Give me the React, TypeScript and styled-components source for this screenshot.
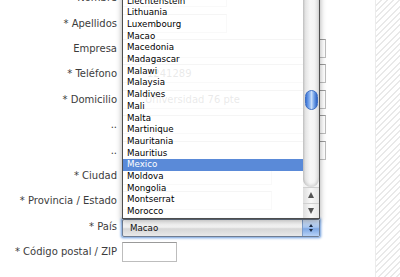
import React from "react";
import styled, { createGlobalStyle } from "styled-components";

const GlobalStyle = createGlobalStyle`
  html, body { margin: 0; padding: 0; background: #ffffff; overflow: hidden; }
  * { box-sizing: border-box; }
`;

const Page = styled.div`
  width: 400px;
  height: 277px;
  overflow: hidden;
  display: flex;
  background: #ffffff;
  font-family: "DejaVu Sans", Verdana, sans-serif;
`;

const Main = styled.div`
  flex: 1;
  position: relative;
`;

const Hatch = styled.div`
  width: 25px;
  border-left: 1px solid #ececec;
  background: repeating-linear-gradient(
    135deg,
    #ffffff 0px,
    #ffffff 3px,
    #e9e9e9 3px,
    #e9e9e9 4.4px
  );
`;

const Form = styled.div`
  display: grid;
  grid-template-columns: 117px 1fr;
  grid-auto-rows: 25.4px;
  column-gap: 5px;
  align-items: center;
  margin-top: -15px;
`;

const Label = styled.div`
  text-align: right;
  font-size: 10px;
  color: #3c3c3c;
  white-space: nowrap;
`;

const Field = styled.div`
  position: relative;
  display: flex;
  align-items: center;
`;

const TextInput = styled.div<{ $w: number; $h?: number; $indent?: number }>`
  width: ${(p) => p.$w}px;
  height: ${(p) => p.$h ?? 19}px;
  border: 1px solid #bdbdbd;
  border-top-color: #9a9a9a;
  background: #ffffff;
  font-size: 10px;
  color: #222;
  display: flex;
  align-items: center;
  padding-left: ${(p) => p.$indent ?? 4}px;
`;

const SelectBox = styled.div`
  position: relative;
  width: 198px;
  height: 18px;
  margin-top: 3px;
  border: 1px solid #6f7d92;
  border-radius: 2px;
  box-shadow: 0 0 0 1px #9bbbe6, 0 0 2px 2px #b9d0f0;
  background: linear-gradient(#ffffff 0%, #f1f1f1 45%, #d6d6d6 55%, #e9e9e9 100%);
  display: flex;
  align-items: center;
`;

const SelectText = styled.span`
  flex: 1;
  padding-left: 7px;
  font-size: 8.7px;
  color: #111;
`;

const Stepper = styled.div`
  width: 17px;
  align-self: stretch;
  border-left: 1px solid #7d9cc8;
  background: linear-gradient(#d8e7fb 0%, #a9c7f0 45%, #7ea8e4 55%, #b7d2f6 100%);
  display: flex;
  flex-direction: column;
  align-items: center;
  justify-content: center;
  gap: 2px;
`;

const Tri = styled.div<{ $up?: boolean }>`
  width: 0;
  height: 0;
  border-left: 2.5px solid transparent;
  border-right: 2.5px solid transparent;
  ${(p) =>
    p.$up
      ? "border-bottom: 3px solid #1c2c44;"
      : "border-top: 3px solid #1c2c44;"}
`;

const Menu = styled.div`
  position: absolute;
  left: -1px;
  bottom: calc(100% + 1px);
  width: 198px;
  display: flex;
  border: 1px solid #4e4e4e;
  border-top: none;
  background: rgba(255, 255, 255, 0.9);
  box-shadow: 0 2px 6px rgba(0, 0, 0, 0.35);
  z-index: 5;
`;

const Items = styled.div`
  width: 180px;
  display: flex;
  flex-direction: column;
`;

const Item = styled.div<{ $selected?: boolean }>`
  height: 11.7px;
  line-height: 11.7px;
  padding-left: 4px;
  font-size: 8.7px;
  color: ${(p) => (p.$selected ? "#ffffff" : "#000000")};
  background: ${(p) => (p.$selected ? "#5a8ad8" : "transparent")};
  white-space: nowrap;
`;

const ScrollBar = styled.div`
  width: 16px;
  display: flex;
  flex-direction: column;
  background: #f3f3f3;
`;

const Track = styled.div`
  position: relative;
  flex: 1;
  border-radius: 0 0 8px 8px;
  background: linear-gradient(90deg, #c9c9c9 0%, #e4e4e4 15%, #f7f7f7 45%, #f5f5f5 70%, #dcdcdc 100%);
  box-shadow: inset 0 -2px 3px rgba(0, 0, 0, 0.12);
`;

const Thumb = styled.div`
  position: absolute;
  left: 2px;
  right: 1px;
  bottom: 77px;
  height: 20px;
  border-radius: 7px;
  border: 1px solid #3f6fc2;
  background: linear-gradient(90deg, #3a73d6 0%, #8fb8f2 35%, #c9defa 50%, #6c9de6 75%, #2f63c4 100%);
`;

const ArrowBtn = styled.div<{ $h: number }>`
  height: ${(p) => p.$h}px;
  display: flex;
  align-items: center;
  justify-content: center;
  background: linear-gradient(90deg, #dedede 0%, #f8f8f8 50%, #e6e6e6 100%);
  border-top: 1px solid #d0d0d0;
`;

const ArrowGlyph = styled.div<{ $up?: boolean }>`
  width: 0;
  height: 0;
  border-left: 3.5px solid transparent;
  border-right: 3.5px solid transparent;
  ${(p) =>
    p.$up
      ? "border-bottom: 6px solid #555;"
      : "border-top: 6px solid #555;"}
`;

const countries = [
  "Libya",
  "Liechtenstein",
  "Lithuania",
  "Luxembourg",
  "Macao",
  "Macedonia",
  "Madagascar",
  "Malawi",
  "Malaysia",
  "Maldives",
  "Mali",
  "Malta",
  "Martinique",
  "Mauritania",
  "Mauritius",
  "Mexico",
  "Moldova",
  "Mongolia",
  "Montserrat",
  "Morocco",
];

export default function App() {
  return (
    <>
      <GlobalStyle />
      <Page>
        <Main>
          <Form>
            <Label>* Nombre</Label>
            <Field>
              <TextInput $w={105} />
            </Field>

            <Label>* Apellidos</Label>
            <Field>
              <TextInput $w={105} />
            </Field>

            <Label>Empresa</Label>
            <Field>
              <TextInput $w={204} />
            </Field>

            <Label>* Teléfono</Label>
            <Field>
              <TextInput $w={204} $indent={24}>1241289</TextInput>
            </Field>

            <Label>* Domicilio</Label>
            <Field>
              <TextInput $w={204} $indent={22}>Universidad 76 pte</TextInput>
            </Field>

            <Label>..</Label>
            <Field>
              <TextInput $w={204} />
            </Field>

            <Label>..</Label>
            <Field>
              <TextInput $w={204} />
            </Field>

            <Label>* Ciudad</Label>
            <Field>
              <TextInput $w={150} />
            </Field>

            <Label>* Provincia / Estado</Label>
            <Field>
              <TextInput $w={150} />
            </Field>

            <Label>* País</Label>
            <Field>
              <SelectBox>
                <Menu>
                  <Items>
                    {countries.map((c) => (
                      <Item key={c} $selected={c === "Mexico"}>
                        {c}
                      </Item>
                    ))}
                  </Items>
                  <ScrollBar>
                    <Track>
                      <Thumb />
                    </Track>
                    <ArrowBtn $h={16}>
                      <ArrowGlyph $up />
                    </ArrowBtn>
                    <ArrowBtn $h={15}>
                      <ArrowGlyph />
                    </ArrowBtn>
                  </ScrollBar>
                </Menu>
                <SelectText>Macao</SelectText>
                <Stepper>
                  <Tri $up />
                  <Tri />
                </Stepper>
              </SelectBox>
            </Field>

            <Label>* Código postal / ZIP</Label>
            <Field>
              <TextInput $w={55} $h={20} />
            </Field>
          </Form>
        </Main>
        <Hatch />
      </Page>
    </>
  );
}
